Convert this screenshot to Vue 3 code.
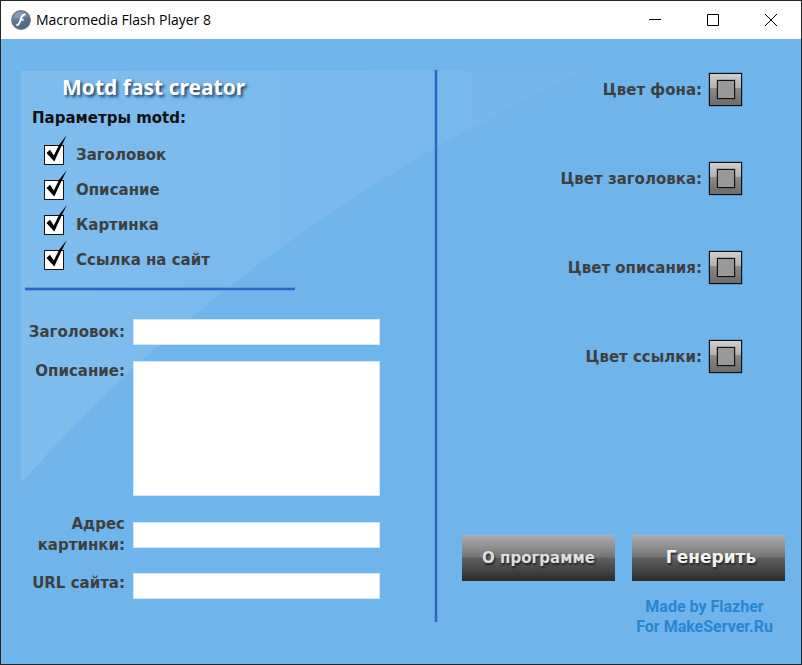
<script setup>
import { ref } from 'vue'

const options = ref([
  { id: 'opt-title', label: 'Заголовок', checked: true },
  { id: 'opt-desc', label: 'Описание', checked: true },
  { id: 'opt-image', label: 'Картинка', checked: true },
  { id: 'opt-link', label: 'Ссылка на сайт', checked: true },
])

const colors = [
  { id: 'color-bg', label: 'Цвет фона:' },
  { id: 'color-title', label: 'Цвет заголовка:' },
  { id: 'color-desc', label: 'Цвет описания:' },
  { id: 'color-link', label: 'Цвет ссылки:' },
]

const form = ref({ title: '', desc: '', image: '', url: '' })
</script>

<template>
  <div class="window">
    <header class="titlebar">
      <svg class="logo" viewBox="0 0 20 20" aria-hidden="true">
        <defs>
          <linearGradient id="ball" x1="0" y1="0" x2="0.6" y2="1">
            <stop offset="0" stop-color="#93a5bd" />
            <stop offset="0.5" stop-color="#607895" />
            <stop offset="1" stop-color="#4a6486" />
          </linearGradient>
        </defs>
        <circle cx="10" cy="10" r="9.3" fill="url(#ball)" stroke="#6d7683" stroke-width="1.2" />
        <path d="M3 7.500A7.500 7.500 0 0 1 17 7.500C13 5.500 8 11 3 7.500Z" fill="#fff" opacity="0.16" />
        <path d="M14.600 4.200C10.800 4.300 10.300 7.300 9.400 10.200C8.600 13 7.800 14.800 5.400 15.200M9.300 9.800H12.600" fill="none" stroke="#fff" stroke-width="2" />
      </svg>
      <span class="caption">Macromedia Flash Player 8</span>
      <div class="controls">
        <button type="button" aria-label="Свернуть">
          <svg viewBox="0 0 12 12"><path d="M0 5.500H12" /></svg>
        </button>
        <button type="button" aria-label="Развернуть">
          <svg viewBox="0 0 12 12"><path d="M.5 .5H11.500V11.500H.5Z" /></svg>
        </button>
        <button type="button" aria-label="Закрыть">
          <svg viewBox="0 0 12 12"><path d="M0 0L12 12M12 0L0 12" /></svg>
        </button>
      </div>
    </header>

    <main class="stage">
      <svg class="glare" viewBox="0 0 564 412" aria-hidden="true">
        <defs>
          <linearGradient id="shine" x1="0" y1="0" x2="1" y2="0">
            <stop offset="0" stop-color="#fff" stop-opacity="0.11" />
            <stop offset="1" stop-color="#fff" stop-opacity="0.03" />
          </linearGradient>
        </defs>
        <path d="M0 0H564Q226 156 0 412Z" fill="url(#shine)" />
      </svg>

      <section class="left">
        <h1>Motd fast creator</h1>
        <h2>Параметры motd:</h2>
        <ul class="options">
          <li v-for="o in options" :key="o.id">
            <span class="check">
              <input :id="o.id" v-model="o.checked" type="checkbox" />
              <svg v-if="o.checked" viewBox="0 0 24 30" aria-hidden="true">
                <path d="M2.500 18L6 14.800L9.800 20.500L15 10L22.800 0L17 12L10.300 26.500Z" />
              </svg>
            </span>
            <label :for="o.id">{{ o.label }}</label>
          </li>
        </ul>
        <hr />
        <form class="fields" @submit.prevent>
          <label for="f-title">Заголовок:</label>
          <input id="f-title" v-model="form.title" type="text" />
          <label class="top" for="f-desc">Описание:</label>
          <textarea id="f-desc" v-model="form.desc"></textarea>
          <label for="f-image">Адрес картинки:</label>
          <input id="f-image" v-model="form.image" type="text" />
          <label class="top" for="f-url">URL сайта:</label>
          <input id="f-url" v-model="form.url" type="text" />
        </form>
      </section>

      <div class="divider"></div>

      <section class="right">
        <ul class="colors">
          <li v-for="c in colors" :key="c.id">
            <label :for="c.id">{{ c.label }}</label>
            <button :id="c.id" type="button" class="swatch"><span></span></button>
          </li>
        </ul>
        <footer class="bottom">
          <button type="button" class="action">О программе</button>
          <button type="button" class="action primary">Генерить</button>
          <p class="credits">Made by Flazher<br />For MakeServer.Ru</p>
        </footer>
      </section>
    </main>
  </div>
</template>

<style>
body {
  margin: 0;
}
</style>

<style scoped>
.window {
  box-sizing: border-box;
  min-height: 100vh;
  display: flex;
  flex-direction: column;
  border: 1px solid #262626;
  background: #70b4ec;
  color: #3f3f3f;
  font: bold 15px/20px "DejaVu Sans", sans-serif;
}
.titlebar {
  display: flex;
  align-items: center;
  height: 38px;
  padding: 0 1px 0 10px;
  background: #fff;
  color: #000;
}
.logo {
  width: 20px;
  height: 20px;
}
.caption {
  margin-left: 5px;
  font: 14px/20px "Open Sans", sans-serif;
}
.controls {
  display: flex;
  margin-left: auto;
}
.controls button {
  display: flex;
  align-items: center;
  justify-content: center;
  width: 58px;
  height: 38px;
  padding: 0;
  border: 0;
  background: none;
}
.controls svg {
  width: 12px;
  height: 12px;
  fill: none;
  stroke: #000;
}
.stage {
  position: relative;
  flex: 1;
  display: grid;
  grid-template-columns: 433px 4px 1fr;
  padding-top: 31px;
}
.glare {
  position: absolute;
  top: 32px;
  left: 20px;
  width: 564px;
  height: 412px;
}
.left,
.right,
.divider {
  position: relative;
}
.divider {
  height: 552px;
  background: linear-gradient(90deg, #5f9fe0 1px, #2a66c4 1px 3px, #5f9fe0 3px);
}
ul {
  margin: 0;
  padding: 0;
  list-style: none;
}
h1 {
  margin: 0 0 0 61px;
  color: #fff;
  font: bold 21px/34px "Noto Sans", sans-serif;
  text-shadow: 2px 2px 3px #1d3c5c;
}
h2 {
  margin: 0 0 0 31px;
  color: #111;
  font-size: 15px;
  line-height: 29px;
}
.options {
  padding: 4px 0 0 43px;
}
.options li {
  display: flex;
  align-items: center;
  gap: 12px;
  height: 35px;
}
.check {
  position: relative;
  display: flex;
}
.check input {
  appearance: none;
  box-sizing: border-box;
  width: 20px;
  height: 20px;
  margin: 0;
  border: 1px solid #111;
  background: #fff;
}
.check svg {
  position: absolute;
  left: 0;
  bottom: 0;
  width: 24px;
  height: 30px;
  fill: #000;
  pointer-events: none;
}
hr {
  width: 270px;
  height: 4px;
  margin: 10px 0 28px 24px;
  border: 0;
  background: linear-gradient(#5f9fe0 1px, #2a66c4 1px 3px, #5f9fe0 3px);
}
.fields {
  display: grid;
  grid-template-columns: 100px 247px;
  grid-template-rows: 26px 135px 45px 26px;
  gap: 16px 8px;
  align-items: center;
  margin-left: 24px;
  line-height: 21px;
  text-align: right;
}
.fields label {
  justify-self: end;
}
.fields .top {
  align-self: start;
}
.fields input,
.fields textarea {
  box-sizing: border-box;
  width: 100%;
  height: 26px;
  margin: 0;
  padding: 2px 4px;
  border: 1px solid #d3e8fa;
  background: #fff;
  font: 14px/20px "DejaVu Sans", sans-serif;
  resize: none;
}
.fields textarea {
  height: 100%;
}
.right {
  display: flex;
  flex-direction: column;
  padding: 3px 16px 27px 24px;
}
.colors {
  display: grid;
  gap: 56px;
  padding-right: 43px;
}
.colors li {
  display: flex;
  align-items: center;
  justify-content: flex-end;
  gap: 7px;
}
.swatch {
  display: flex;
  align-items: center;
  justify-content: center;
  width: 33px;
  height: 33px;
  padding: 0;
  border: 1px solid #0c0f12;
  background: linear-gradient(#cfcfcf, #b0b0b0 46%, #8a8a8a 46%, #6c6c6c);
  box-shadow: 0 0 1px #0c0f12;
}
.swatch span {
  width: 16px;
  height: 17px;
  border: 1px solid #111;
  background: #999;
  box-shadow: 0 0 1px #111;
}
.bottom {
  display: grid;
  grid-template-columns: 1fr 1fr;
  gap: 16px 17px;
  margin-top: auto;
}
.action {
  height: 46px;
  padding: 0;
  border: 0;
  background: linear-gradient(#adadad, #747474 48%, #606060 50%, #2b2b2b);
  color: #dedede;
  font: bold 15px/20px "DejaVu Sans", sans-serif;
  text-shadow: 1px 2px 2px #222;
}
.action.primary {
  padding: 0 0 3px 5px;
  color: #f2f2f2;
  font-size: 17px;
}
.credits {
  grid-column: 2;
  margin: 0;
  padding-right: 8px;
  color: #2587d0;
  font: bold 16px/20px Roboto, sans-serif;
  text-align: center;
}
</style>
